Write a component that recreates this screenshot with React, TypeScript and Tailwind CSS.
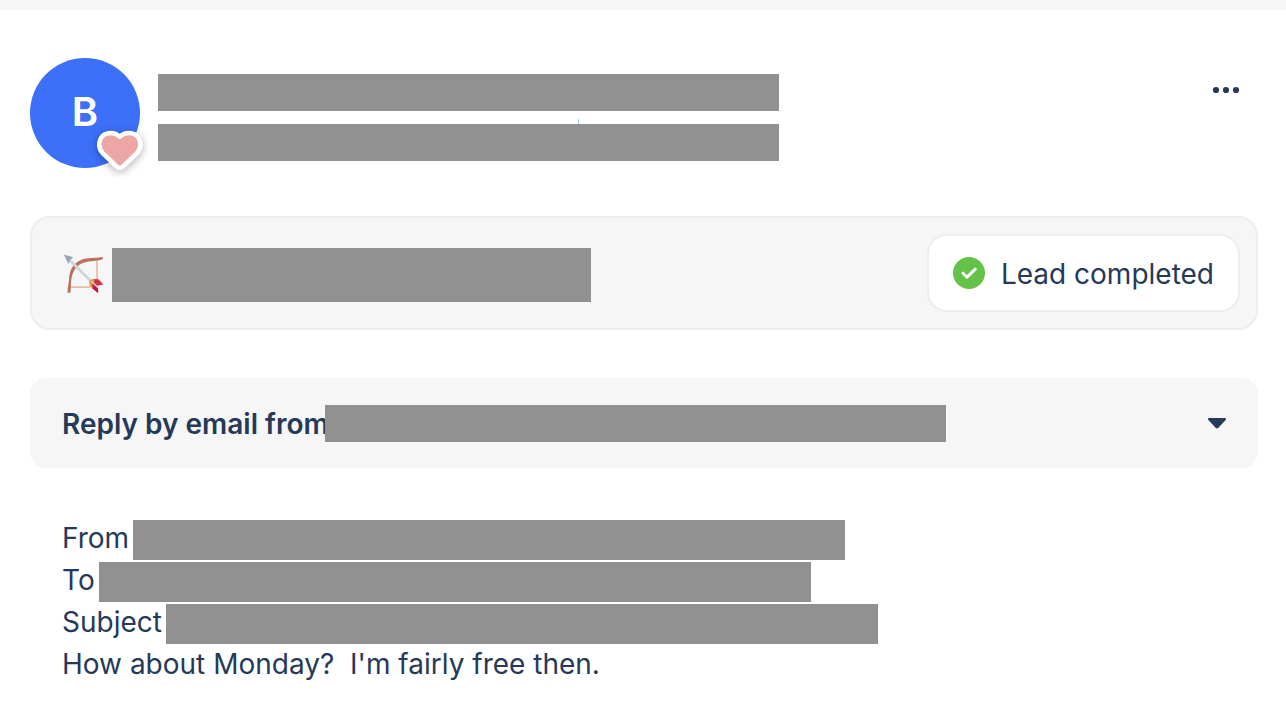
function Redacted({ className }: { className: string }) {
  return <span aria-hidden="true" className={`block min-w-0 bg-[#919191] ${className}`} />;
}

function HeartBadge() {
  return (
    <svg
      aria-hidden="true"
      viewBox="0 0 56 52"
      className="absolute -right-2 -bottom-2 h-[52px] w-14 drop-shadow-[0_2px_4px_rgba(0,0,0,0.3)]"
    >
      <path
        d="M27.800 44c-1.200 0-2.200-.6-3.200-1.500L11 29.500C4.800 23 6.200 11.200 16.200 9.300c4.600-.8 8.600.6 11.600 3.400 3-2.800 7-4.200 11.600-3.400C49.400 11.200 50.800 23 44.600 29.500L31 42.500c-1 .9-2 1.500-3.200 1.500z"
        fill="#eda6a6"
        stroke="#fff"
        strokeWidth="4.500"
        strokeLinejoin="round"
      />
    </svg>
  );
}

function BowAndArrow() {
  return (
    <svg role="img" aria-label="Bow and arrow" viewBox="0 0 42 42" className="size-[42px] shrink-0">
      <path d="M34 5v24M5.500 33.200h22" stroke="#e9bda8" strokeWidth="1.800" fill="none" />
      <path
        d="M39.800 2.800C36 4.200 30 3.700 25 4.200 20 4.600 15.500 6.500 12.500 9.500 8 13.500 6.500 19 6.200 24c-.2 5-1.800 9.500-1.700 14.500l2.700.4C8.300 34.500 7.500 29 8.500 24.500 9.500 18 12 14.200 15.500 11.400 19.500 8 25 7.800 30 7c4-.7 6.500-.6 9.700-1.800z"
        fill="#bb705a"
      />
      <path d="M7 6.500l26 25.500" stroke="#cbd5db" strokeWidth="2.600" />
      <path d="M.8.500l9.400 2.700-3 2.800-1.700 4z" fill="#94a6b0" />
      <path d="M27.500 26.500l3.500-1.500 4.500.2 4.800 5.300-5.800 1.200-4-2z" fill="#d92e43" />
      <path d="M26.800 28l3.700 2 4.500 2.700.2 6.300-6-4.500z" fill="#d92e43" />
      <path d="M30 30l4.500 2 .7 7-4.300-3.400z" fill="#b91c3b" />
      <path d="M26 27.500c1-1.700 3.500-2.800 5.500-2.500l-.3 3.200-2 1.200.3 4.500-2.500-1.700z" fill="#e5963d" />
      <path d="M28 27l7.500 7" stroke="#d5d3d6" strokeWidth="1.600" />
    </svg>
  );
}

function CheckCircle() {
  return (
    <svg aria-hidden="true" viewBox="0 0 32 32" className="size-8 shrink-0">
      <circle cx="16" cy="16" r="16" fill="#64c249" />
      <path
        d="M10 16.200l4 4 8.300-8"
        fill="none"
        stroke="#fff"
        strokeWidth="3"
        strokeLinecap="round"
        strokeLinejoin="round"
      />
    </svg>
  );
}

const fields = ["From", "To", "Subject"];

export default function App() {
  return (
    <div className="min-h-screen bg-white font-['Inter',sans-serif] text-[28px] leading-[42px] text-[#263957]">
      <div className="h-2.5 bg-[#f6f6f6]" />
      <main className="flex flex-col gap-12 pt-12 pr-7 pb-6 pl-[30px]">
        <header className="flex items-start">
          <div className="relative flex size-[110px] shrink-0 items-center justify-center rounded-full bg-[#3c70f8] pb-0.5 text-[40px] font-semibold text-white">
            B
            <HeartBadge />
          </div>
          <div className="relative ml-[18px] flex min-w-0 flex-1 flex-col gap-[13px] pt-4">
            <Redacted className="h-[37px] w-full max-w-[621px]" />
            <span aria-hidden="true" className="absolute top-[61px] left-[420px] h-[5px] w-px bg-[#b1cdfb]" />
            <Redacted className="h-[37px] w-full max-w-[621px]" />
          </div>
          <button type="button" aria-label="More actions" className="mt-4 mr-3 flex h-8 w-10 items-center justify-center">
            <svg aria-hidden="true" viewBox="0 0 28 8" className="h-2 w-7" fill="#263957">
              <circle cx="4" cy="4" r="3.100" />
              <circle cx="14" cy="4" r="3.100" />
              <circle cx="24" cy="4" r="3.100" />
            </svg>
          </button>
        </header>

        <section className="flex items-center justify-between rounded-[20px] border-2 border-[#eeeeee] bg-[#f6f6f6] p-4">
          <div className="flex min-w-0 flex-1 items-center gap-[7px] pt-1 pl-[15px]">
            <BowAndArrow />
            <Redacted className="h-[54px] w-full max-w-[479px]" />
          </div>
          <div className="flex shrink-0 items-center gap-4 rounded-[20px] border-2 border-[#eeeeee] bg-white px-6 py-[15px]">
            <CheckCircle />
            <span className="pt-0.5">Lead completed</span>
          </div>
        </section>

        <section>
          <button type="button" className="flex w-full items-center rounded-2xl bg-[#f6f6f6] px-8 py-[23px] text-left">
            <span className="shrink-0 pt-0.5 font-semibold">Reply by email from</span>
            <Redacted className="-ml-1 h-[37px] w-full max-w-[621px]" />
            <svg aria-hidden="true" viewBox="0 0 18 11" className="ml-auto h-[11px] w-[18px] shrink-0" fill="#263957">
              <path d="M1.200 0h15.600c1.200 0 1.500 1.400.8 2.100l-7.200 7.700c-.8.900-2 .9-2.800 0L.4 2.100C-.3 1.400 0 0 1.200 0z" />
            </svg>
          </button>
          <div className="px-8 pt-[49px]">
            <dl>
              {fields.map((label) => (
                <div key={label} className="flex h-[42px] items-start gap-1">
                  <dt className="shrink-0">{label}</dt>
                  <dd className="min-w-0 flex-1 pt-[3px]">
                    <Redacted className="h-10 w-full max-w-[712px]" />
                  </dd>
                </div>
              ))}
            </dl>
            <p className="whitespace-pre-wrap">{"How about Monday?  I'm fairly free then."}</p>
          </div>
        </section>
      </main>
    </div>
  );
}
